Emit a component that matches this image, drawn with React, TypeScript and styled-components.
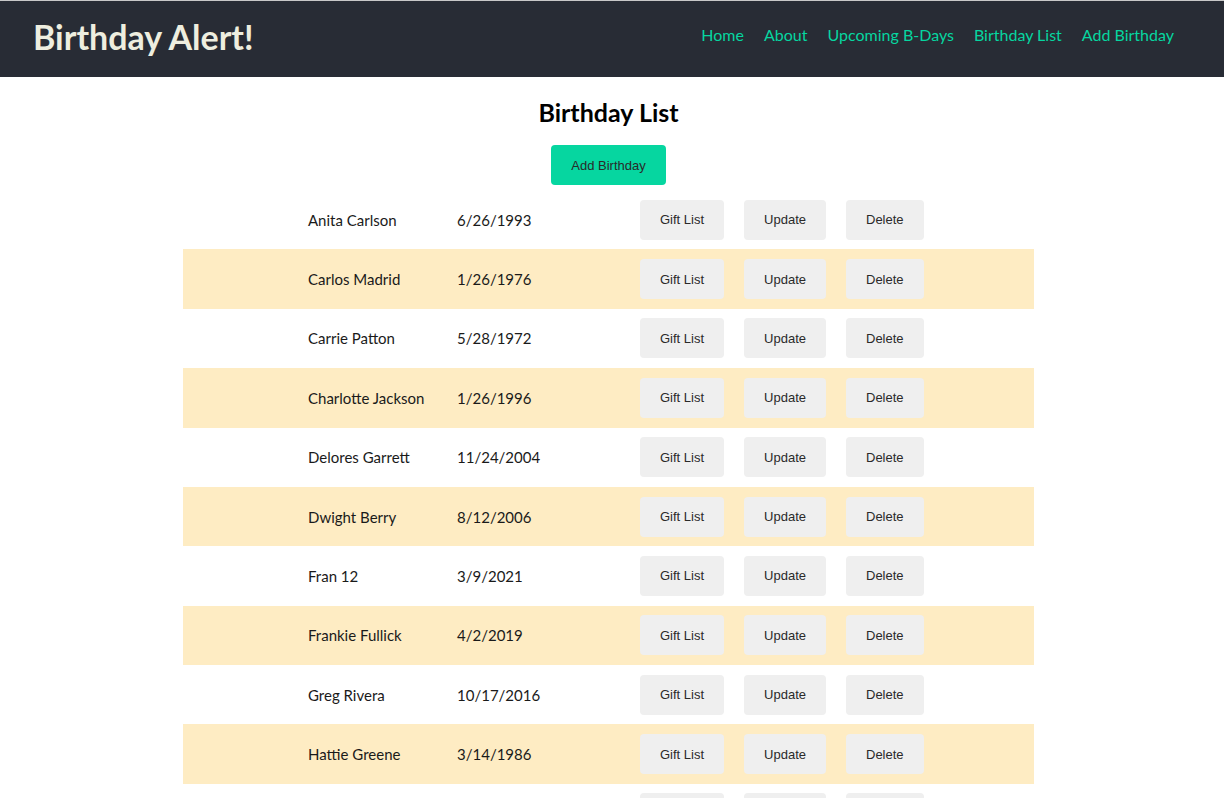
import React from "react";
import styled, { createGlobalStyle } from "styled-components";

interface Birthday {
  name: string;
  date: string;
}

const birthdays: Birthday[] = [
  { name: "Anita Carlson", date: "6/26/1993" },
  { name: "Carlos Madrid", date: "1/26/1976" },
  { name: "Carrie Patton", date: "5/28/1972" },
  { name: "Charlotte Jackson", date: "1/26/1996" },
  { name: "Delores Garrett", date: "11/24/2004" },
  { name: "Dwight Berry", date: "8/12/2006" },
  { name: "Fran 12", date: "3/9/2021" },
  { name: "Frankie Fullick", date: "4/2/2019" },
  { name: "Greg Rivera", date: "10/17/2016" },
  { name: "Hattie Greene", date: "3/14/1986" },
  { name: "Ivan Moreno", date: "7/2/1990" },
  { name: "Jenna Wolfe", date: "9/19/1988" },
];

const GlobalStyle = createGlobalStyle`
  body {
    margin: 0;
    font-family: Lato, "Noto Sans", sans-serif;
    background: #fff;
    color: #1a1a1a;
  }
`;

const Header = styled.header`
  display: flex;
  align-items: center;
  justify-content: space-between;
  height: 77px;
  padding: 0 50px 0 33px;
  background-color: #282c35;
  border-top: 1px solid #c8c8c8;
  box-sizing: border-box;
`;

const Logo = styled.h1`
  margin: 0 0 5px;
  font-size: 34px;
  font-weight: 700;
  color: #eeeedf;
`;

const Nav = styled.nav`
  display: flex;
  gap: 20px;
  margin-bottom: 10px;
`;

const NavLink = styled.a`
  font-size: 16px;
  color: #06d6a0;
  text-decoration: none;
  cursor: pointer;
`;

const Main = styled.main`
  display: flex;
  flex-direction: column;
  align-items: center;
  padding: 20px 7px 0 0;
`;

const Title = styled.h2`
  margin: 0 0 18px;
  font-size: 25px;
  font-weight: 700;
  color: #000;
`;

const Button = styled.button<{ primary?: boolean }>`
  height: 40px;
  padding: 0 20px;
  border: none;
  border-radius: 4px;
  font-family: "Liberation Sans", Arial, sans-serif;
  font-size: 13px;
  color: #2a2a2a;
  cursor: pointer;
  background-color: ${({ primary }) => (primary ? "#06d6a0" : "#efefef")};
`;

const List = styled.div`
  width: 851px;
  margin-top: 5px;
`;

const Row = styled.div<{ striped: boolean }>`
  display: grid;
  grid-template-columns: 149px 183px auto auto auto 1fr;
  align-items: center;
  height: 59.375px;
  padding-left: 125px;
  font-size: 15px;
  background-color: ${({ striped }) => (striped ? "#feecc3" : "transparent")};

  & > button + button {
    margin-left: 20px;
  }
`;

const Cell = styled.span`
  white-space: nowrap;
`;

const App: React.FC = () => {
  return (
    <>
      <GlobalStyle />
      <Header>
        <Logo>Birthday Alert!</Logo>
        <Nav>
          <NavLink>Home</NavLink>
          <NavLink>About</NavLink>
          <NavLink>Upcoming B-Days</NavLink>
          <NavLink>Birthday List</NavLink>
          <NavLink>Add Birthday</NavLink>
        </Nav>
      </Header>
      <Main>
        <Title>Birthday List</Title>
        <Button primary>Add Birthday</Button>
        <List>
          {birthdays.map((b, i) => (
            <Row key={b.name} striped={i % 2 === 1}>
              <Cell>{b.name}</Cell>
              <Cell>{b.date}</Cell>
              <Button>Gift List</Button>
              <Button>Update</Button>
              <Button>Delete</Button>
            </Row>
          ))}
        </List>
      </Main>
    </>
  );
};

export default App;
